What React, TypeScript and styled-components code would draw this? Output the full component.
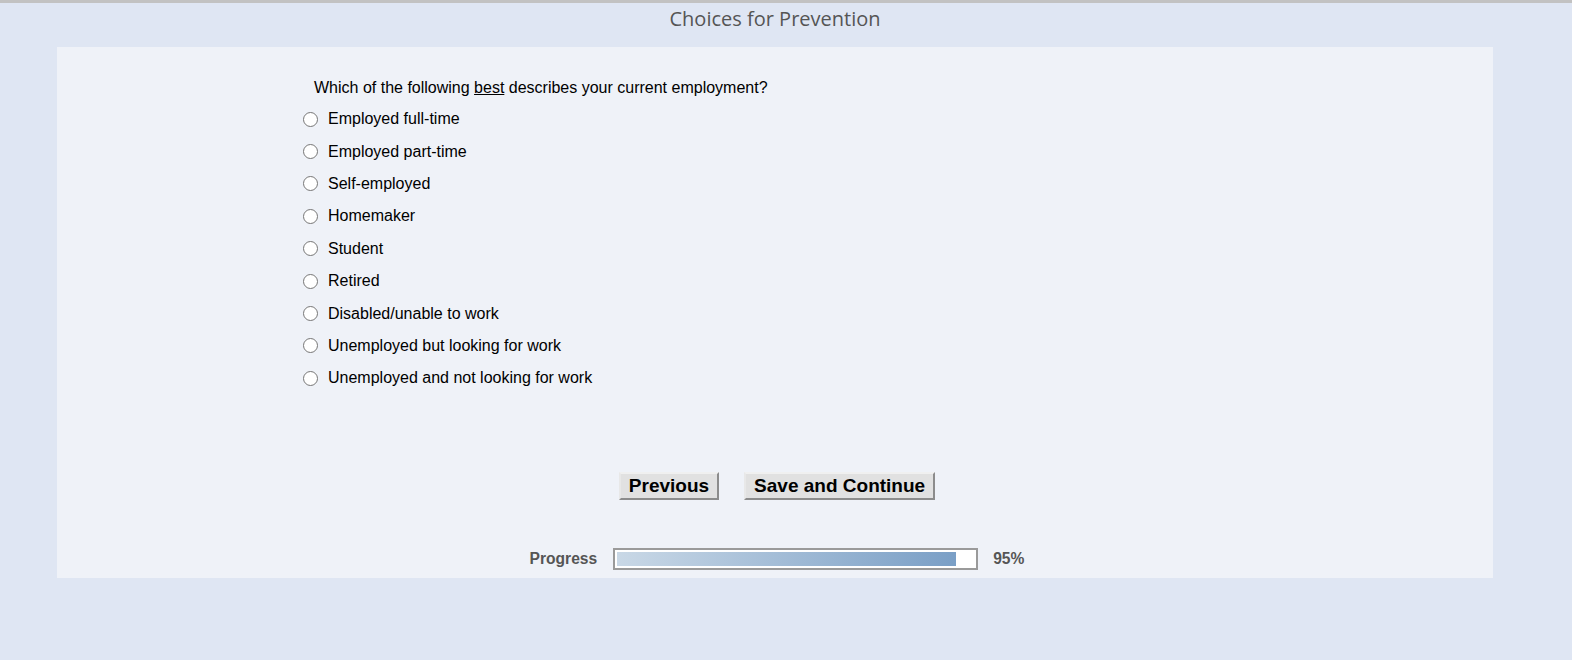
import { FC } from 'react'
import styled, { createGlobalStyle } from 'styled-components'

const OPTIONS = [
  'Employed full-time',
  'Employed part-time',
  'Self-employed',
  'Homemaker',
  'Student',
  'Retired',
  'Disabled/unable to work',
  'Unemployed but looking for work',
  'Unemployed and not looking for work'
]

const PROGRESS = 95

const GlobalStyle = createGlobalStyle`
  html, body {
    margin: 0;
    padding: 0;
    background: #dfe6f3;
    font-family: 'Liberation Sans', Arial, sans-serif;
  }
`

const App: FC = () => {
  return (
    <>
      <GlobalStyle />
      <Page>
        <Header>Choices for Prevention</Header>
        <Panel>
          <Question>
            <Prompt>
              Which of the following <u>best</u> describes your current employment?
            </Prompt>
            <OptionList>
              {OPTIONS.map((label) => (
                <OptionRow key={label}>
                  <Radio type="radio" name="employment" value={label} />
                  <OptionLabel>{label}</OptionLabel>
                </OptionRow>
              ))}
            </OptionList>
          </Question>
          <ButtonBar>
            <NavButton>Previous</NavButton>
            <NavButton>Save and Continue</NavButton>
          </ButtonBar>
          <ProgressRow>
            <ProgressText>Progress</ProgressText>
            <ProgressTrack>
              <ProgressFill style={{ width: `${PROGRESS}%` }} />
            </ProgressTrack>
            <ProgressText>{PROGRESS}%</ProgressText>
          </ProgressRow>
        </Panel>
      </Page>
    </>
  )
}

const Page = styled.div`
  min-height: 660px;
  border-top: 3px solid #c2c2c2;
  box-sizing: border-box;
`

const Header = styled.h1`
  margin: 0 79px 0 57px;
  height: 44px;
  padding-top: 2px;
  box-sizing: border-box;
  text-align: center;
  font-family: 'Open Sans', 'Noto Sans', sans-serif;
  font-size: 20px;
  font-weight: 400;
  color: #555;
`

const Panel = styled.div`
  margin: 0 79px 0 57px;
  height: 531px;
  background: #eff2f8;
  padding: 32px 0 8px;
  box-sizing: border-box;
  display: flex;
  flex-direction: column;
`

const Question = styled.div`
  padding-left: 246px;
  color: #000;
`

const Prompt = styled.div`
  padding-left: 11px;
  font-size: 16px;
  line-height: 18px;
  margin-bottom: 6px;
`

const OptionList = styled.div`
  display: flex;
  flex-direction: column;
`

const OptionRow = styled.label`
  display: flex;
  align-items: center;
  height: 32.4px;
  gap: 10px;
`

const Radio = styled.input`
  appearance: none;
  margin: 0;
  width: 15px;
  height: 15px;
  box-sizing: border-box;
  border: 1px solid #767676;
  border-radius: 50%;
  background: #fff;
  &:checked {
    background: radial-gradient(circle, #0075ff 0 3.5px, #fff 4px);
    border-color: #0075ff;
  }
`

const OptionLabel = styled.span`
  font-size: 16px;
`

const ButtonBar = styled.div`
  margin-top: 77px;
  padding-left: 4px;
  display: flex;
  justify-content: center;
  gap: 25px;
`

const NavButton = styled.button`
  height: 28px;
  padding: 0 8px;
  font-family: 'Liberation Sans', Arial, sans-serif;
  font-size: 19px;
  font-weight: 700;
  color: #000;
  background: #e1e1e1;
  border: 2px solid;
  border-color: #f0f0f0 #8c8c8c #8c8c8c #e8e8e8;
  cursor: pointer;
`

const ProgressRow = styled.div`
  margin-top: 48px;
  padding-left: 4px;
  display: flex;
  align-items: center;
  justify-content: center;
  gap: 15px;
`

const ProgressText = styled.span`
  font-size: 15.6px;
  font-weight: 700;
  color: #555;
`

const ProgressTrack = styled.div`
  width: 365px;
  height: 22px;
  margin-left: 1px;
  box-sizing: border-box;
  border: 2px solid #9a9a9a;
  background: #fff;
  padding: 2px;
`

const ProgressFill = styled.div`
  height: 100%;
  background: linear-gradient(to right, #c9d8e6, #7a9fc6);
`

export default App
